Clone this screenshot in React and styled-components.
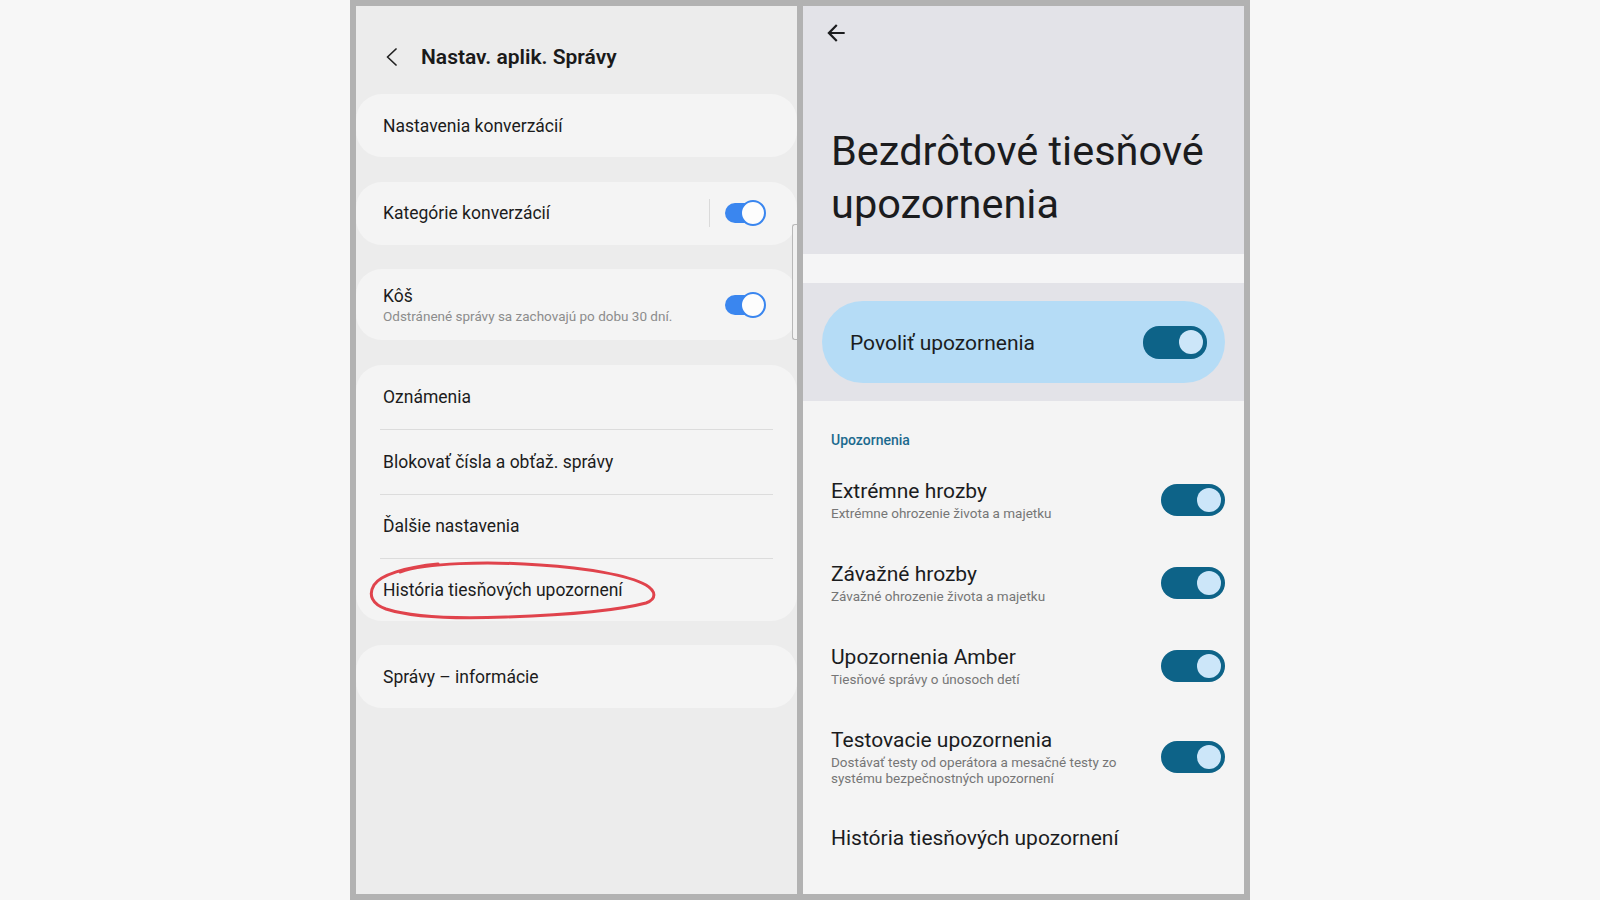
import React from "react";
import styled, {createGlobalStyle} from "styled-components";

const GlobalStyle = createGlobalStyle`
html, body {
    margin: 0;
    padding: 0;
    background: #f7f7f7;
}
body {
    font-family: Roboto, "Noto Sans", "Liberation Sans", sans-serif;
    -webkit-font-smoothing: antialiased;
}
`

const App = () => {
    return (
        <React.Fragment>
            <GlobalStyle/>
            <Page>
                <Frame>

                    <LeftPanel>
                        <LeftHeader>
                            <svg width="13" height="18" viewBox="0 0 13 18">
                                <path d="M11 1 L2.5 9 L11 17" fill="none" stroke="#222" strokeWidth="1.7" strokeLinecap="round" strokeLinejoin="round"/>
                            </svg>
                            <h1>Nastav. aplik. Správy</h1>
                        </LeftHeader>

                        <CardList>
                            <Card>
                                <Row>
                                    <Label>Nastavenia konverzácií</Label>
                                </Row>
                            </Card>

                            <Card>
                                <Row>
                                    <Label>Kategórie konverzácií</Label>
                                    <VDivider/>
                                    <SamsungSwitch/>
                                </Row>
                            </Card>

                            <Card>
                                <Row h={71}>
                                    <div>
                                        <Label>Kôš</Label>
                                        <SubLabel>Odstránené správy sa zachovajú po dobu 30 dní.</SubLabel>
                                    </div>
                                    <SamsungSwitch/>
                                </Row>
                            </Card>

                            <Card>
                                <Row h={64}>
                                    <Label>Oznámenia</Label>
                                </Row>
                                <HDivider/>
                                <Row h={64}>
                                    <Label>Blokovať čísla a obťaž. správy</Label>
                                </Row>
                                <HDivider/>
                                <Row h={63}>
                                    <Label>Ďalšie nastavenia</Label>
                                </Row>
                                <HDivider/>
                                <Row h={62}>
                                    <Label>História tiesňových upozornení</Label>
                                    <Scribble width="292" height="66" viewBox="0 0 292 66">
                                        <path
                                            d="M34 15 C60 6, 120 4, 174 8 C220 11, 262 18, 280 28 C290 34, 291 42, 280 46 C250 54, 200 58, 140 60 C90 62, 45 60, 20 52 C6 47, 2 38, 8 28 C14 18, 40 10, 72 7"
                                            fill="none"
                                            stroke="#e0434c"
                                            strokeWidth="3"
                                            strokeLinecap="round"/>
                                    </Scribble>
                                </Row>
                            </Card>

                            <Card>
                                <Row>
                                    <Label>Správy – informácie</Label>
                                </Row>
                            </Card>
                        </CardList>

                        <ScrollThumb/>
                    </LeftPanel>

                    <RightPanel>
                        <RightHeader>
                            <BackButton>
                                <svg width="26" height="26" viewBox="0 0 24 24">
                                    <path d="M20 11H7.83l5.59-5.59L12 4l-8 8 8 8 1.41-1.41L7.83 13H20v-2z" fill="#1b1c1e"/>
                                </svg>
                            </BackButton>
                            <BigTitle>Bezdrôtové tiesňové upozornenia</BigTitle>
                        </RightHeader>

                        <Stripe/>

                        <MainSwitchSection>
                            <MainSwitchCard>
                                <span>Povoliť upozornenia</span>
                                <M3Switch/>
                            </MainSwitchCard>
                        </MainSwitchSection>

                        <AlertList>
                            <SectionTitle>Upozornenia</SectionTitle>

                            <AlertRow>
                                <div>
                                    <AlertTitle>Extrémne hrozby</AlertTitle>
                                    <AlertSub>Extrémne ohrozenie života a majetku</AlertSub>
                                </div>
                                <M3Switch/>
                            </AlertRow>

                            <AlertRow>
                                <div>
                                    <AlertTitle>Závažné hrozby</AlertTitle>
                                    <AlertSub>Závažné ohrozenie života a majetku</AlertSub>
                                </div>
                                <M3Switch/>
                            </AlertRow>

                            <AlertRow>
                                <div>
                                    <AlertTitle>Upozornenia Amber</AlertTitle>
                                    <AlertSub>Tiesňové správy o únosoch detí</AlertSub>
                                </div>
                                <M3Switch/>
                            </AlertRow>

                            <AlertRow>
                                <div>
                                    <AlertTitle>Testovacie upozornenia</AlertTitle>
                                    <AlertSub>Dostávať testy od operátora a mesačné testy zo systému bezpečnostných upozornení</AlertSub>
                                </div>
                                <M3Switch/>
                            </AlertRow>

                            <AlertRow last>
                                <AlertTitle>História tiesňových upozornení</AlertTitle>
                            </AlertRow>
                        </AlertList>
                    </RightPanel>

                </Frame>
            </Page>
        </React.Fragment>
    )
}

const Page = styled.div `
display: flex;
justify-content: center;
height: 900px;
`
const Frame = styled.div `
display: flex;
gap: 6px;
width: 900px;
height: 900px;
padding: 6px;
box-sizing: border-box;
background: #b2b2b2;
`

/* left phone: samsung settings */

const LeftPanel = styled.section `
position: relative;
flex: 1;
display: flex;
flex-direction: column;
background: #ececec;
color: #1c1c1c;
`
const LeftHeader = styled.header `
height: 88px;
box-sizing: border-box;
padding: 14px 0 0 29px;
display: flex;
align-items: center;
gap: 23px;
h1 {
    margin: 0;
    font-size: 21px;
    font-weight: 600;
    color: #1a1a1a;
}
`
const CardList = styled.div `
display: flex;
flex-direction: column;
gap: 24.5px;
`
const Card = styled.div `
background: #f4f4f4;
border-radius: 26px;
`
const Row = styled.div `
position: relative;
display: flex;
align-items: center;
height: ${props => props.h || 63}px;
padding: 0 31px 0 27px;
> div { flex: 1; }
`
const Label = styled.div `
font-size: 17.5px;
line-height: 22px;
flex: 1;
`
const SubLabel = styled.div `
font-size: 13.5px;
line-height: 18px;
color: #8c8c8c;
`
const VDivider = styled.span `
width: 1px;
height: 28px;
background: #dadada;
margin-right: 15px;
`
const HDivider = styled.div `
height: 1px;
margin: 0 24px;
background: #dcdcdc;
`
const SamsungSwitch = styled.span `
position: relative;
flex-shrink: 0;
width: 41px;
height: 26px;
&::before {
    content: "";
    position: absolute;
    left: 0;
    top: 3px;
    width: 34px;
    height: 20px;
    border-radius: 10px;
    background: #3a86ef;
}
&::after {
    content: "";
    position: absolute;
    right: 0;
    top: 0;
    width: 22px;
    height: 22px;
    border-radius: 50%;
    background: #fdfdfd;
    border: 2px solid #3a86ef;
}
`
const Scribble = styled.svg `
position: absolute;
left: 10px;
top: -2px;
pointer-events: none;
`
const ScrollThumb = styled.span `
position: absolute;
right: 0;
top: 218px;
width: 4px;
height: 114px;
border: 1px solid #b8b8b8;
border-right: none;
border-radius: 3px 0 0 3px;
background: #f1f1f1;
`

/* right phone: android emergency alerts */

const RightPanel = styled.section `
flex: 1;
display: flex;
flex-direction: column;
background: #f4f4f4;
color: #1b1c1e;
`
const RightHeader = styled.header `
background: #e3e3e8;
padding: 14px 0 24px 0;
`
const BackButton = styled.div `
width: 26px;
height: 26px;
margin-left: 20px;
svg { display: block; }
`
const BigTitle = styled.h2 `
margin: 79px 0 0 28px;
font-size: 41.5px;
line-height: 52.5px;
font-weight: 400;
max-width: 400px;
`
const Stripe = styled.div `
height: 29px;
background: #f5f5f6;
`
const MainSwitchSection = styled.div `
background: #e3e3e8;
padding: 18px 19px;
`
const MainSwitchCard = styled.div `
display: flex;
align-items: center;
justify-content: space-between;
height: 82px;
padding: 0 18px 0 28px;
border-radius: 41px;
background: #b5dcf6;
span {
    font-size: 21px;
    padding-top: 1px;
}
`
const M3Switch = styled.span `
position: relative;
flex-shrink: 0;
width: 64px;
height: 32px;
border-radius: 16px;
background: #0d6388;
&::after {
    content: "";
    position: absolute;
    right: 4px;
    top: 4px;
    width: 24px;
    height: 24px;
    border-radius: 50%;
    background: #cce6f9;
}
`
const AlertList = styled.div `
padding-top: 29px;
`
const SectionTitle = styled.div `
padding-left: 28px;
margin-bottom: 8px;
font-size: 14px;
line-height: 20px;
font-weight: 500;
color: #1c6a8e;
`
const AlertRow = styled.div `
display: flex;
align-items: center;
justify-content: space-between;
padding: ${props => props.last ? "19px" : "20px"} 19px 20px 28px;
`
const AlertTitle = styled.div `
font-size: 21px;
line-height: 26px;
`
const AlertSub = styled.div `
margin-top: 1px;
max-width: 300px;
font-size: 13.5px;
line-height: 16px;
color: #767676;
`

export default App;
